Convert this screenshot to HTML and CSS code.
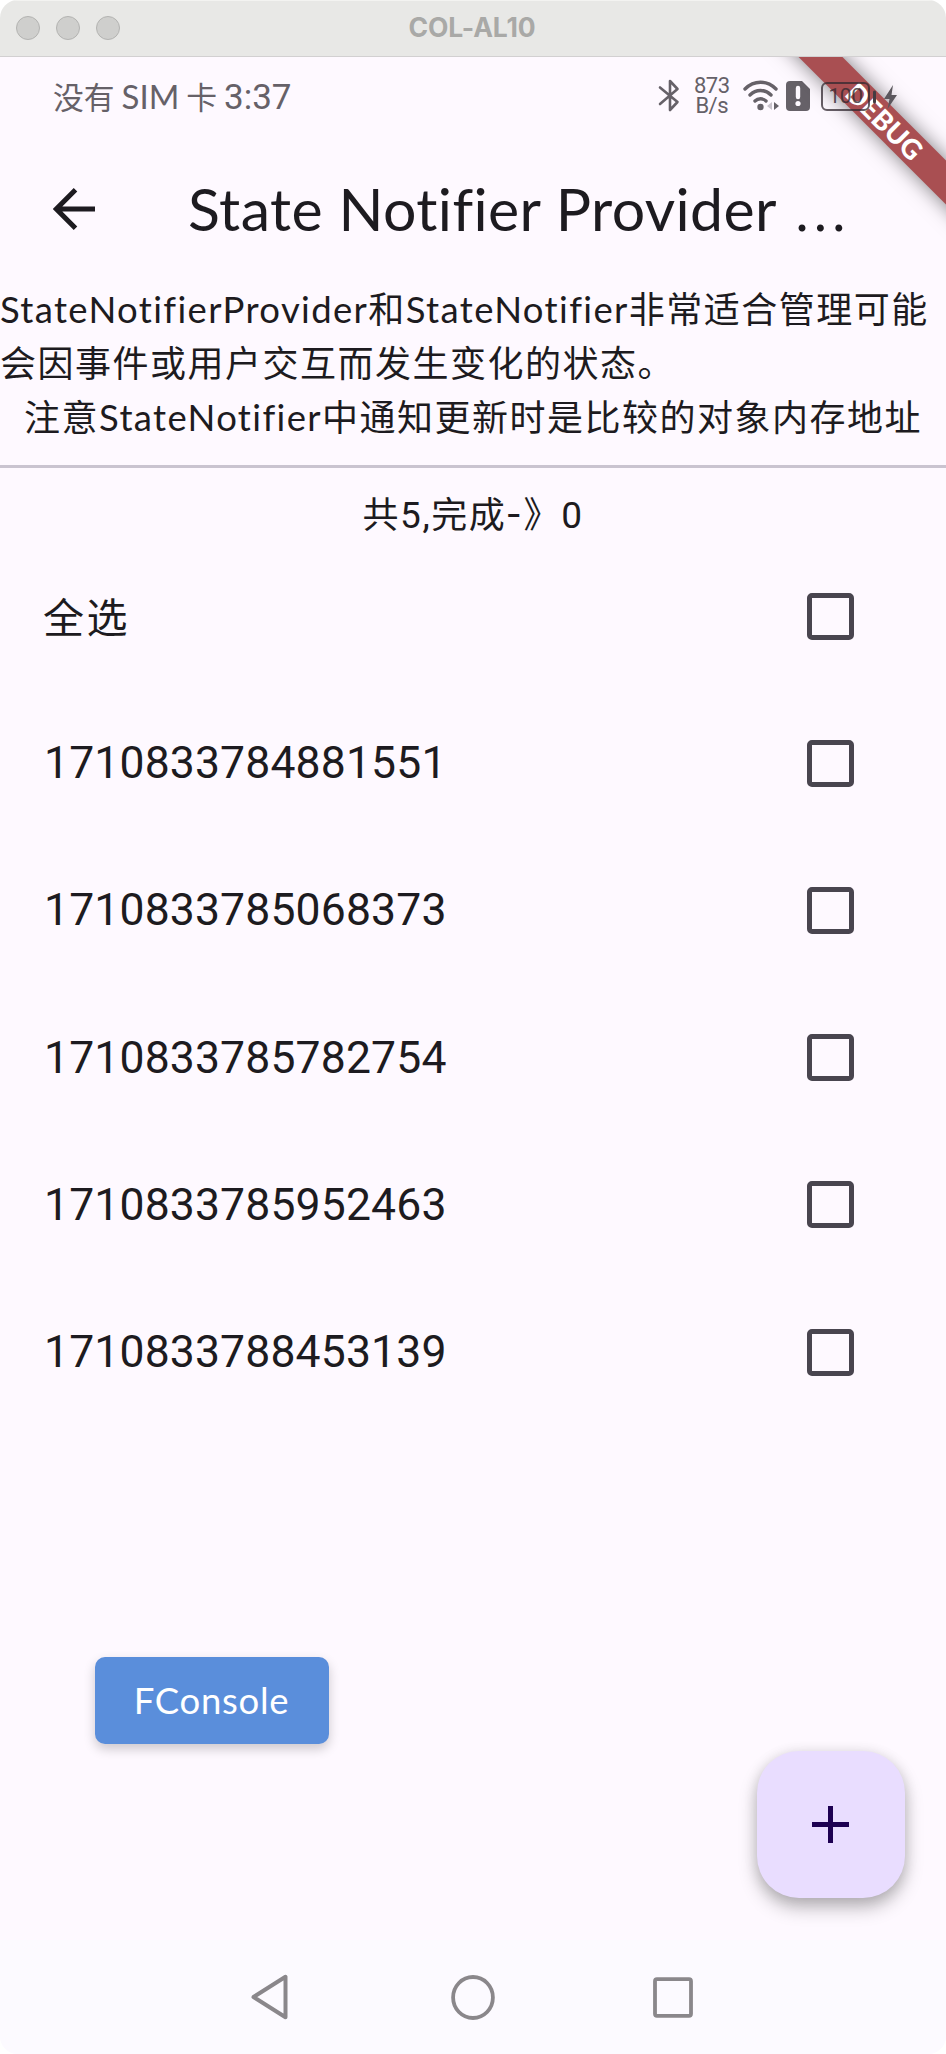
FILE: index.html
```html
<!DOCTYPE html>
<html lang="zh-CN">
<head>
<meta charset="utf-8">
<title>COL-AL10</title>
<link rel="stylesheet" href="styles.css">
</head>
<body>
<div class="window">
  <header class="titlebar">
    <div class="lights"><i></i><i></i><i></i></div>
    <span class="device">COL-AL10</span>
  </header>
  <div class="screen">
    <div class="statusbar">
      <div class="carrier"><span class="sim">没有 <span class="latin">SIM</span> 卡</span><span class="clock">3:37</span></div>
      <div class="indicators">
        <svg class="bt" width="22" height="34" viewBox="0 0 22 34" fill="none" stroke="#666168" stroke-width="2.6" stroke-linejoin="round" stroke-linecap="round"><path d="M2 8.500L19.500 23 12 31V2l7.500 8L2 25"/></svg>
        <div class="speed"><span>873</span><span>B/s</span></div>
        <svg class="wifi" width="37" height="32" viewBox="0 0 37 32" fill="none" stroke="#666168" stroke-width="3.400" stroke-linecap="round"><path d="M2 9C11 0 24 0 33 9M7 15c6-6 15-6 21 0M12 21c3-3 8-3 11 0"/><circle cx="17.500" cy="27" r="3.200" fill="#666168" stroke="none"/><path d="M29 22v8l-5-4z" fill="#c9c3cc" stroke="none"/><path d="M31 22l5 4-5 4z" fill="#666168" stroke="none"/></svg>
        <svg class="simcard" width="24" height="30" viewBox="0 0 24 30"><path d="M4 0h12l8 8v18a4 4 0 0 1-4 4H4a4 4 0 0 1-4-4V4a4 4 0 0 1 4-4z" fill="#666168"/><path d="M12 7v9" stroke="#fef9ff" stroke-width="4.400" stroke-linecap="round"/><circle cx="12" cy="22.500" r="2.600" fill="#fef9ff"/></svg>
      </div>
    </div>
    <nav class="appbar">
      <svg class="back" width="42" height="42" viewBox="0 0 42 42" fill="none" stroke="#1d1b20" stroke-width="5"><path d="M42 21H3M22.500 1.800L3.300 21l19.200 19.200"/></svg>
      <h1 class="heading">State Notifier Provider <span class="dots">…</span></h1>
    </nav>
    <main class="content">
      <p class="desc"><span class="latin-run">StateNotifierProvider</span>和<span class="latin-run">StateNotifier</span>非常适合管理可能<br>会因事件或用户交互而发生变化的状态。</p>
      <p class="note">注意<span class="latin-run">StateNotifier</span>中通知更新时是比较的对象内存地址</p>
      <hr class="divider">
      <p class="summary">共<span class="num">5,</span>完成<span class="dash">-</span>》<span class="num">0</span></p>
      <ul class="todos">
        <li><span class="cjk">全选</span><i class="box"></i></li>
        <li><span>1710833784881551</span><i class="box"></i></li>
        <li><span>1710833785068373</span><i class="box"></i></li>
        <li><span>1710833785782754</span><i class="box"></i></li>
        <li><span>1710833785952463</span><i class="box"></i></li>
        <li><span>1710833788453139</span><i class="box"></i></li>
      </ul>
    </main>
    <footer class="navbar">
      <svg width="37" height="46" viewBox="0 0 37 46" fill="none" stroke="#8a878b" stroke-width="4" stroke-linejoin="round"><path d="M34.500 2.800v40.400L2.500 23z"/></svg>
      <svg class="home" width="44" height="45" viewBox="0 0 44 45" fill="none" stroke="#8a878b" stroke-width="3.800"><ellipse cx="22" cy="22.500" rx="19.900" ry="20.500"/></svg>
      <svg class="recent" width="40" height="41" viewBox="0 0 40 41" fill="none" stroke="#8a878b" stroke-width="3.800"><rect x="2" y="2.200" width="36" height="36.600" rx="2"/></svg>
    </footer>
    <div class="ribbon"><span class="band">DEBUG</span></div>
    <div class="battery"><span class="level">100</span>
      <svg width="25" height="26" viewBox="0 0 25 26"><path d="M1.500 8v10" stroke="#443c42" stroke-width="3" stroke-linecap="round"/><path d="M20 1L11 15h5.500l-2 10 9.500-14h-5.500z" fill="#5b575d"/></svg>
    </div>
    <button class="console">FConsole</button>
    <button class="fab"><svg width="37" height="37" viewBox="0 0 37 37" stroke="#1d0052" stroke-width="5"><path d="M18.500 0v37M0 18.500h37"/></svg></button>
  </div>
</div>
</body>
</html>
```
FILE: styles.css
```css
* { box-sizing: border-box; }
body { margin: 0; background: #fff; }
p, h1, ul { margin: 0; padding: 0; }
.window {
  width: 946px;
  height: 2054px;
  display: flex;
  flex-direction: column;
  border-radius: 18px;
  overflow: hidden;
  font-family: Lato, "Noto Sans CJK SC", sans-serif;
  color: #1d1b20;
}
.titlebar {
  position: relative;
  height: 57px;
  flex: none;
  display: flex;
  align-items: center;
  justify-content: center;
  background: #e8e8e6;
  border-top: 1px solid #f3f3f1;
  border-bottom: 1px solid #d2d0d1;
}
.lights { position: absolute; left: 16px; top: 15px; display: flex; gap: 16px; }
.lights i { width: 24px; height: 24px; border-radius: 50%; background: #cfcfcd; border: 1px solid #b3b3b1; }
.device { font: 700 26.500px/54px Inter, sans-serif; color: #a9a9a7; letter-spacing: -0.100px; margin: -3px 2px 0 0; }
.screen { position: relative; flex: 1; display: flex; flex-direction: column; background: #fef9ff; overflow: hidden; }
.statusbar { height: 78px; padding: 0 148px 0 53px; display: flex; justify-content: space-between; align-items: center; color: #666168; }
.carrier { display: flex; align-items: center; gap: 7px; height: 78px; }
.sim { font: 30.800px/44px "Noto Sans CJK SC", sans-serif; }
.latin { font-family: Lato, sans-serif; font-size: 33px; line-height: 1; }
.clock { font: 35px/44px Roboto, sans-serif; margin-top: 4px; }
.indicators { display: flex; align-items: center; margin-right: -12px; }
.speed { display: flex; flex-direction: column; align-items: center; font: 22px/20px Roboto, sans-serif; letter-spacing: -0.500px; margin: 0 13px 0 14px; }
.simcard { margin-left: 6.500px; }
.appbar { height: 147px; flex: none; display: flex; align-items: center; padding-left: 53px; }
.heading { font-size: 59px; font-weight: 400; line-height: 76px; margin: -5px 0 0 93px; letter-spacing: 0.400px; white-space: nowrap; }
.dots { font-size: 75px; font-weight: 300; line-height: 1; letter-spacing: 0; margin-left: 2px; }
.content { flex: 1; }
.desc, .note, .summary { font-size: 36px; line-height: 54px; letter-spacing: 1.500px; white-space: nowrap; }
.latin-run { font-size: 36.500px; letter-spacing: 1.350px; line-height: 1; }
.note { text-align: center; }
.divider { margin: 21px 0 19px; border: 0; height: 3px; background: #cac4d0; }
.summary { text-align: center; }
.num { font-family: Roboto, sans-serif; font-size: 37px; line-height: 1; }
.dash { font-family: "Noto Sans CJK SC", sans-serif; font-size: 43px; line-height: 1; letter-spacing: 2.500px; }
.todos { list-style: none; padding-top: 1px; }
.todos li { height: 147.200px; padding: 1px 92px 0 44px; display: flex; align-items: center; justify-content: space-between; font: 44.500px/60px Roboto, sans-serif; letter-spacing: 0.150px; }
.todos .cjk { font: 41px/60px "Noto Sans CJK SC", sans-serif; letter-spacing: 2.500px; margin: -2px 0 0 -1px; }
.box { width: 47px; height: 47px; border: 5px solid #49454f; border-radius: 5px; }
.navbar { height: 114px; flex: none; display: flex; align-items: center; padding: 0 0 0 251px; background: #fcfaff; }
.home { margin-left: 163px; }
.recent { margin-left: 158px; }
.ribbon { position: absolute; inset: 0 0 auto auto; width: 220px; height: 220px; overflow: hidden; }
.band {
  position: absolute; left: 7px; top: 46.500px; width: 300px; height: 31px;
  transform: rotate(45deg);
  background: #a94f52; box-shadow: 0 0 20px rgba(0, 0, 0, 0.5);
  color: #fff; font: 900 27.500px/31px Lato, sans-serif; text-align: center; padding-left: 5px;
}
.battery { position: absolute; right: 48px; top: 25px; display: flex; align-items: center; gap: 3px; }
.level { width: 49px; height: 29px; border: 2.500px solid rgba(50, 40, 48, 0.75); border-radius: 6px; font: 21px/24px Roboto, sans-serif; letter-spacing: -0.500px; text-align: center; color: rgba(50, 40, 48, 0.8); }
.console {
  position: absolute; left: 94.500px; top: 1600px; width: 234px; height: 87px;
  border: 0; border-radius: 10px; background: #5a8edb; color: #fff;
  box-shadow: 0 5px 12px rgba(0, 0, 0, 0.2);
  font: 36.500px/87px Lato, sans-serif; letter-spacing: 0.700px; padding: 0;
}
.fab {
  position: absolute; left: 757px; top: 1694px; width: 147.500px; height: 147px;
  display: flex; align-items: center; justify-content: center; padding: 0;
  border: 0; border-radius: 42px; background: #e9ddff;
  box-shadow: 0 10px 18px rgba(0, 0, 0, 0.25), 0 2px 14px rgba(0, 0, 0, 0.12);
}
```
